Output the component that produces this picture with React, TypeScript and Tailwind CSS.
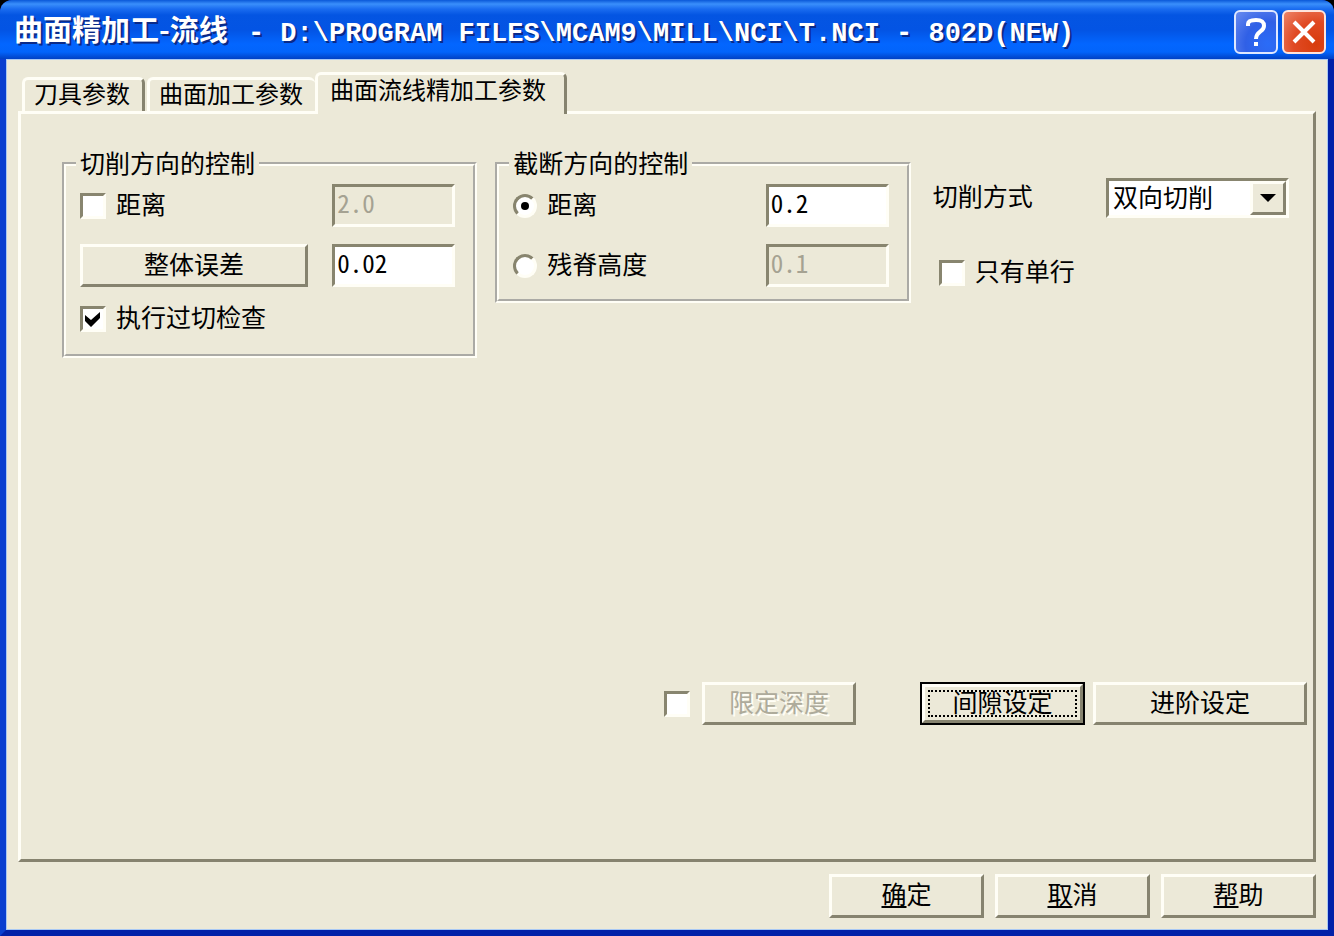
import React, { useState } from 'react';
import clsx from 'clsx';

const sunken = 'border-[3px] border-t-[#88856f] border-l-[#88856f] border-r-[#fffef6] border-b-[#fffef6]';
const raised = 'border-[3px] border-t-[#fffef6] border-l-[#fffef6] border-r-[#86836f] border-b-[#86836f]';

type ButtonProps = React.ButtonHTMLAttributes<HTMLButtonElement>;

const PushButton = ({ className, children, ...rest }: ButtonProps) => (
  <button
    type="button"
    className={clsx(
      'bg-[#ece9d8] leading-7 text-center pb-[6px]',
      raised,
      'disabled:text-[#aeab9b] disabled:[text-shadow:2px_2px_0_#fffef6]',
      className
    )}
    {...rest}
  >
    {children}
  </button>
);

interface TickProps {
  label: string;
  hideLabel?: boolean;
  defaultChecked?: boolean;
}

const CheckBox = ({ label, hideLabel, defaultChecked }: TickProps) => (
  <label className="flex items-center gap-[10px]">
    <span className="relative flex">
      <input
        type="checkbox"
        defaultChecked={defaultChecked}
        aria-label={hideLabel ? label : undefined}
        className={clsx('peer appearance-none size-[26px] bg-white', sunken)}
      />
      <svg
        viewBox="0 0 26 26"
        className="absolute inset-0 hidden peer-checked:block pointer-events-none"
        aria-hidden="true"
      >
        <path d="M5 9 L11 14 L20 6 V12 L11 21 L5 15 Z" fill="#000" />
      </svg>
    </span>
    {!hideLabel && <span className="leading-6 pb-[6px]">{label}</span>}
  </label>
);

interface RadioProps {
  label: string;
  checked: boolean;
  onChange: () => void;
}

const Radio = ({ label, checked, onChange }: RadioProps) => (
  <label className="flex items-center gap-[10px]">
    <span className="relative flex items-center justify-center">
      <input
        type="radio"
        name="step-mode"
        checked={checked}
        onChange={onChange}
        className={clsx('peer appearance-none size-6 rounded-full bg-white', sunken)}
      />
      <span className="absolute hidden peer-checked:block size-2 rounded-full bg-black pointer-events-none" />
    </span>
    <span className="leading-6 pb-[6px]">{label}</span>
  </label>
);

interface FieldProps {
  label: string;
  value: string;
  disabled?: boolean;
}

const Field = ({ label, value, disabled }: FieldProps) => (
  <input
    type="text"
    aria-label={label}
    defaultValue={value}
    disabled={disabled}
    className={clsx(
      "w-[123px] h-[43px] px-[2px] pb-2 bg-white [font-feature-settings:'hwid'] disabled:bg-[#ece9d8] disabled:text-[#a5a292]",
      sunken
    )}
  />
);

interface GroupProps {
  title: string;
  className?: string;
  children: React.ReactNode;
}

const Group = ({ title, className, children }: GroupProps) => (
  <fieldset className={clsx('min-w-0 border-4 [border-style:groove] border-[#fffef6] pl-[14px]', className)}>
    <legend className="-ml-1 px-1 pb-1 leading-6">{title}</legend>
    <div className="flex flex-col gap-[17px] pt-[6px]">{children}</div>
  </fieldset>
);

const TitleBar = () => (
  <header className="flex items-center h-[59px] pl-[14px] pr-2 bg-[linear-gradient(#0a58d8_0px,#3a8ffb_4px,#1a6cf0_9px,#0455e2_15px,#0354e4_30px,#0366ff_44px,#0264fb_52px,#0040c4_59px)]">
    <h1 className="flex-1 flex items-baseline gap-1 pt-[2px] font-bold text-white whitespace-pre [text-shadow:2px_2px_0_#0a2a88]">
      <span className="text-[29px]">曲面精加工-流线</span>
      <span className="font-['Liberation_Mono',monospace] text-[27px]">
        {' - D:\\PROGRAM FILES\\MCAM9\\MILL\\NCI\\T.NCI - 802D(NEW)'}
      </span>
    </h1>
    <div className="flex gap-1 pt-1">
      <button
        type="button"
        aria-label="Help"
        className="size-11 rounded-md border-2 border-[#dfe8ff] bg-[radial-gradient(circle_at_80%_80%,#2a6cf8,#3060e6_50%,#6a8cf0)]"
      >
        <svg viewBox="0 0 40 40" fill="none" stroke="#fff" strokeWidth="4" aria-hidden="true">
          <path d="M12 14 V12 C12 9 15 8 20 8 C26 8 28 10 28 14 C28 20 20 19 20 27" />
          <path d="M20 30 V34" />
        </svg>
      </button>
      <button
        type="button"
        aria-label="Close"
        className="size-11 rounded-md border-2 border-[#ffe4dc] bg-[radial-gradient(circle_at_80%_80%,#d83c0c,#e04a24_50%,#ee8468)]"
      >
        <svg viewBox="0 0 40 40" fill="none" stroke="#fff" strokeWidth="4" aria-hidden="true">
          <path d="M10 10 L30 30 M30 10 L10 30" />
        </svg>
      </button>
    </div>
  </header>
);

const tabBase =
  'rounded-t-md border-t-[3px] border-l-[3px] border-t-[#fffef6] border-l-[#fffef6] text-2xl leading-6 bg-[#ece9d8] whitespace-nowrap';

const Tabs = () => (
  <div role="tablist" className="flex items-end pl-1">
    <button
      type="button"
      role="tab"
      aria-selected="false"
      className={clsx(tabBase, 'h-[34px] pl-[9px] pr-3 pb-[6px] border-r-[3px] border-r-[#86836f]')}
    >
      刀具参数
    </button>
    <button
      type="button"
      role="tab"
      aria-selected="false"
      className={clsx(tabBase, 'h-[34px] ml-[2px] pl-[9px] pr-3 pb-[6px]')}
    >
      曲面加工参数
    </button>
    <button
      type="button"
      role="tab"
      aria-selected="true"
      className={clsx(tabBase, 'relative h-[42px] -mb-[3px] pl-3 pr-[18px] pb-3 border-r-[3px] border-r-[#86836f]')}
    >
      曲面流线精加工参数
    </button>
  </div>
);

const App = () => {
  const [stepMode, setStepMode] = useState<'distance' | 'scallop'>('distance');

  return (
    <div className="min-h-screen bg-black flex font-['Noto_Sans_CJK_SC',sans-serif] text-[25px] leading-7 text-black">
      <div className="flex-1 flex flex-col rounded-t-xl overflow-hidden bg-[#0220a8]">
        <TitleBar />
        <main className="flex-1 flex flex-col border-x-[6px] border-b-[6px] border-l-[#0a3fd0] border-r-[#0220a8] border-b-[#0220a8] px-3 pt-[13px] pb-3 bg-[#ece9d8] shadow-[inset_0_0_0_1px_#a8c8f4]">
          <Tabs />
          <section role="tabpanel" className={clsx('flex-1 flex flex-col', raised)}>
            <div className="grid grid-cols-[415fr_415fr_360fr] items-start gap-[18px] pl-[41px] pr-6 pt-9">
              <Group title="切削方向的控制" className="pr-[18px] pb-5">
                <div className="flex items-center justify-between">
                  <CheckBox label="距离" />
                  <Field label="切削距离" value="2.0" disabled />
                </div>
                <div className="flex items-center justify-between">
                  <PushButton className="w-[228px] h-[43px]">整体误差</PushButton>
                  <Field label="整体误差值" value="0.02" />
                </div>
                <CheckBox label="执行过切检查" defaultChecked />
              </Group>

              <Group title="截断方向的控制" className="pr-[18px] pb-3">
                <div className="flex items-center justify-between">
                  <Radio label="距离" checked={stepMode === 'distance'} onChange={() => setStepMode('distance')} />
                  <Field label="截断距离" value="0.2" disabled={stepMode !== 'distance'} />
                </div>
                <div className="flex items-center justify-between">
                  <Radio label="残脊高度" checked={stepMode === 'scallop'} onChange={() => setStepMode('scallop')} />
                  <Field label="残脊高度值" value="0.1" disabled={stepMode !== 'scallop'} />
                </div>
              </Group>

              <div className="flex flex-col gap-10 pl-1 pt-7">
                <div className="flex items-center justify-between">
                  <label htmlFor="cut-method" className="leading-6 pb-[6px]">
                    切削方式
                  </label>
                  <div className="relative">
                    <select
                      id="cut-method"
                      className={clsx('appearance-none block w-[183px] h-10 pl-1 bg-white leading-7 pb-1', sunken)}
                    >
                      <option>双向切削</option>
                      <option>单向切削</option>
                    </select>
                    <span
                      className={clsx(
                        'absolute right-[3px] inset-y-[3px] w-9 flex items-center justify-center bg-[#ece9d8] pointer-events-none',
                        raised
                      )}
                    >
                      <svg viewBox="0 0 16 8" className="w-4 h-2" aria-hidden="true">
                        <path d="M0 0 H16 L8 8 Z" fill="#000" />
                      </svg>
                    </span>
                  </div>
                </div>
                <div className="pl-[6px]">
                  <CheckBox label="只有单行" />
                </div>
              </div>
            </div>

            <div className="flex items-center justify-end mt-auto mb-[134px] pr-[6px]">
              <CheckBox label="限定深度" hideLabel />
              <PushButton className="w-[154px] h-[43px] ml-3" disabled>
                限定深度
              </PushButton>
              <div className="flex ml-16 bg-black p-[2px]">
                <PushButton className="w-[161px] h-[39px] outline-2 outline-dotted outline-black outline-offset-[-8px]">
                  间隙设定
                </PushButton>
              </div>
              <PushButton className="w-[214px] h-[43px] ml-2">进阶设定</PushButton>
            </div>
          </section>

          <footer className="flex justify-end gap-[11px] pt-3">
            {['确定', '取消', '帮助'].map((name) => (
              <PushButton key={name} className="w-[155px] h-11">
                <span className="underline underline-offset-2 decoration-2">{name[0]}</span>
                {name[1]}
              </PushButton>
            ))}
          </footer>
        </main>
      </div>
    </div>
  );
};

export default App;
